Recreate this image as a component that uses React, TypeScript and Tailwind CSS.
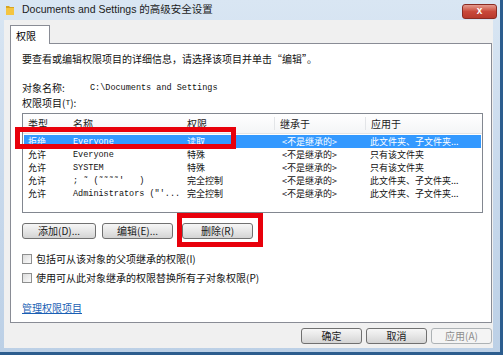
const cjk = "font-['Noto_Sans_CJK_SC','Noto_Sans',sans-serif]";
const mono = "font-['Liberation_Mono','Noto_Sans_CJK_SC',monospace]";

type Row = {
  kind: string;
  name: string;
  perm: string;
  from: string;
  apply: string;
};

const rows: Row[] = [
  { kind: "拒绝", name: "Everyone", perm: "读取", from: "<不是继承的>", apply: "此文件夹、子文件夹..." },
  { kind: "允许", name: "Everyone", perm: "特殊", from: "<不是继承的>", apply: "只有该文件夹" },
  { kind: "允许", name: "SYSTEM", perm: "特殊", from: "<不是继承的>", apply: "只有该文件夹" },
  { kind: "允许", name: "; ˜ (˜˜˜˜'   )", perm: "完全控制", from: "<不是继承的>", apply: "此文件夹、子文件夹..." },
  { kind: "允许", name: "Administrators (\"'...", perm: "完全控制", from: "<不是继承的>", apply: "此文件夹、子文件夹..." },
];

function Btn({ label, w }: { label: string; w: string }) {
  return (
    <div
      className={`${w} h-[16px] flex items-center justify-center rounded-[3px] border border-[#707070] bg-gradient-to-b from-[#f6f6f6] via-[#e6e6e6] to-[#d4d4d4] text-[10px] leading-[14px] text-[#1a1a1a] ${cjk}`}
    >
      {label}
    </div>
  );
}

function Check({ label }: { label: string }) {
  return (
    <div className="h-[14px] flex items-center gap-[4px]">
      <div className="w-[10px] h-[10px] border border-[#8e8f8f] bg-gradient-to-br from-[#dcdcdc] to-[#fbfbfb]" />
      <span className={`text-[10px] leading-[14px] text-[#111] ${cjk}`}>{label}</span>
    </div>
  );
}

export default function App() {
  return (
    <div className="w-[503px] h-[355px] bg-[#2c5d8e] overflow-hidden">
      <div className="relative w-[500px] h-[352px] flex flex-col bg-gradient-to-b from-[#d9e6f3] via-[#c8d9ec] to-[#bcd0e6]">
        {/* title bar */}
        <div className="h-[20px] flex items-center pl-[5px]">
          <svg width="10" height="12" viewBox="0 0 10 12">
            <path d="M1 2h3l1 1h4v8H1z" fill="#d9a520" />
            <path d="M1 4h8v7H1z" fill="#f4c542" />
          </svg>
          <span className="ml-[7px] text-[10.5px] text-[#1b1b1b] font-['Liberation_Sans','Noto_Sans_CJK_SC',sans-serif]">
            Documents and Settings 的高级安全设置
          </span>
          <div className="ml-auto mr-[3px] mt-[2px] w-[35px] h-[15px] rounded-[3px] border border-[#8a2b22] bg-gradient-to-b from-[#e49b8f] via-[#c9483a] to-[#b8392c] flex items-center justify-center">
            <span className="text-[10px] font-bold leading-none text-white font-['Liberation_Sans',sans-serif]">x</span>
          </div>
        </div>

        {/* body */}
        <div className="ml-[4px] mr-[7px] h-[328px] bg-[#f0f0f0] flex flex-col pl-[6px] pr-[1px]">
          <div className="pt-[5px] flex">
            <div className={`w-[40px] h-[19px] -mb-[1px] z-10 bg-white border border-b-0 border-[#898c95] flex items-center pl-[5px] text-[10px] text-black ${cjk}`}>
              权限
            </div>
          </div>
          <div className="h-[280px] bg-white border border-[#898c95] flex flex-col pl-[11px]">
            <div className={`mt-[8px] h-[14px] flex items-center text-[10px] leading-[14px] text-[#111] ${cjk}`}>
              要查看或编辑权限项目的详细信息，请选择该项目并单击“编辑”。
            </div>
            <div className="mt-[15px] h-[14px] flex items-center">
              <span className={`w-[68px] text-[10px] leading-[14px] text-[#111] ${cjk}`}>对象名称:</span>
              <span className={`text-[8.5px] text-[#111] ${mono}`}>C:\Documents and Settings</span>
            </div>
            <div className={`mt-[1px] h-[14px] flex items-center text-[10px] leading-[14px] text-[#111] ${cjk}`}>
              权限项目(<span className={`text-[8px] ${mono}`}>T</span>):
            </div>

            {/* list view */}
            <div className="mt-[3px] w-[461px] h-[100px] border border-[#828790] bg-white flex flex-col">
              <div className={`h-[20px] flex items-center text-[10px] leading-[13px] text-[#222] ${cjk} bg-gradient-to-b from-white to-[#f4f5f7] border-b border-[#e5e5e5]`}>
                <div className="w-[45px] pl-[5px]">类型</div>
                <div className="w-[114px] pl-[5px]">名称</div>
                <div className="w-[93px] pl-[5px] border-r border-[#e3e5e8]">权限</div>
                <div className="w-[91px] pl-[5px] border-r border-[#e3e5e8]">继承于</div>
                <div className="flex-1 pl-[5px]">应用于</div>
              </div>
              <div className="mt-[1px] flex flex-col">
                {rows.map((r, i) => {
                  const sel = i === 0;
                  return (
                    <div
                      key={i}
                      className={`h-[13px] mx-[1px] flex items-center overflow-hidden text-[9px] leading-[12px] ${sel ? "bg-[#3399ff] text-white" : "text-[#111]"}`}
                    >
                      <div className={`w-[44px] pl-[4px] ${cjk}`}>{r.kind}</div>
                      <div className={`w-[114px] pl-[5px] text-[8.5px] whitespace-pre ${mono}`}>{r.name}</div>
                      <div className={`w-[93px] pl-[5px] ${cjk}`}>{r.perm}</div>
                      <div className={`w-[91px] pl-[7px] ${cjk}`}>{r.from}</div>
                      <div className={`flex-1 pl-[4px] ${cjk}`}>{r.apply}</div>
                    </div>
                  );
                })}
              </div>
            </div>

            <div className="mt-[10px] flex">
              <Btn label="添加(D)..." w="w-[74px]" />
              <div className="w-[6px]" />
              <Btn label="编辑(E)..." w="w-[71px]" />
              <div className="w-[9px]" />
              <Btn label="删除(R)" w="w-[71px]" />
            </div>

            <div className="mt-[13px]">
              <Check label="包括可从该对象的父项继承的权限(I)" />
            </div>
            <div className="mt-[5px]">
              <Check label="使用可从此对象继承的权限替换所有子对象权限(P)" />
            </div>

            <div className={`mt-[16px] h-[14px] flex items-center text-[10px] leading-[14px] text-[#1a5fb4] underline ${cjk}`}>
              管理权限项目
            </div>
          </div>

          <div className="mt-[5px] flex justify-end gap-[4px]">
            <Btn label="确定" w="w-[61px]" />
            <Btn label="取消" w="w-[61px]" />
            <div className={`w-[61px] h-[16px] flex items-center justify-center rounded-[3px] border border-[#adb2b5] bg-[#f4f4f4] text-[10px] leading-[14px] text-[#8d8d8d] ${cjk}`}>
              应用(A)
            </div>
          </div>
        </div>

        {/* annotation rectangles */}
        <div className="absolute left-[15px] top-[127px] w-[221px] h-[22px] border-[5px] border-[#e8000b]" />
        <div className="absolute left-[177px] top-[213px] w-[86px] h-[34px] border-[5px] border-[#e8000b]" />
      </div>
    </div>
  );
}
